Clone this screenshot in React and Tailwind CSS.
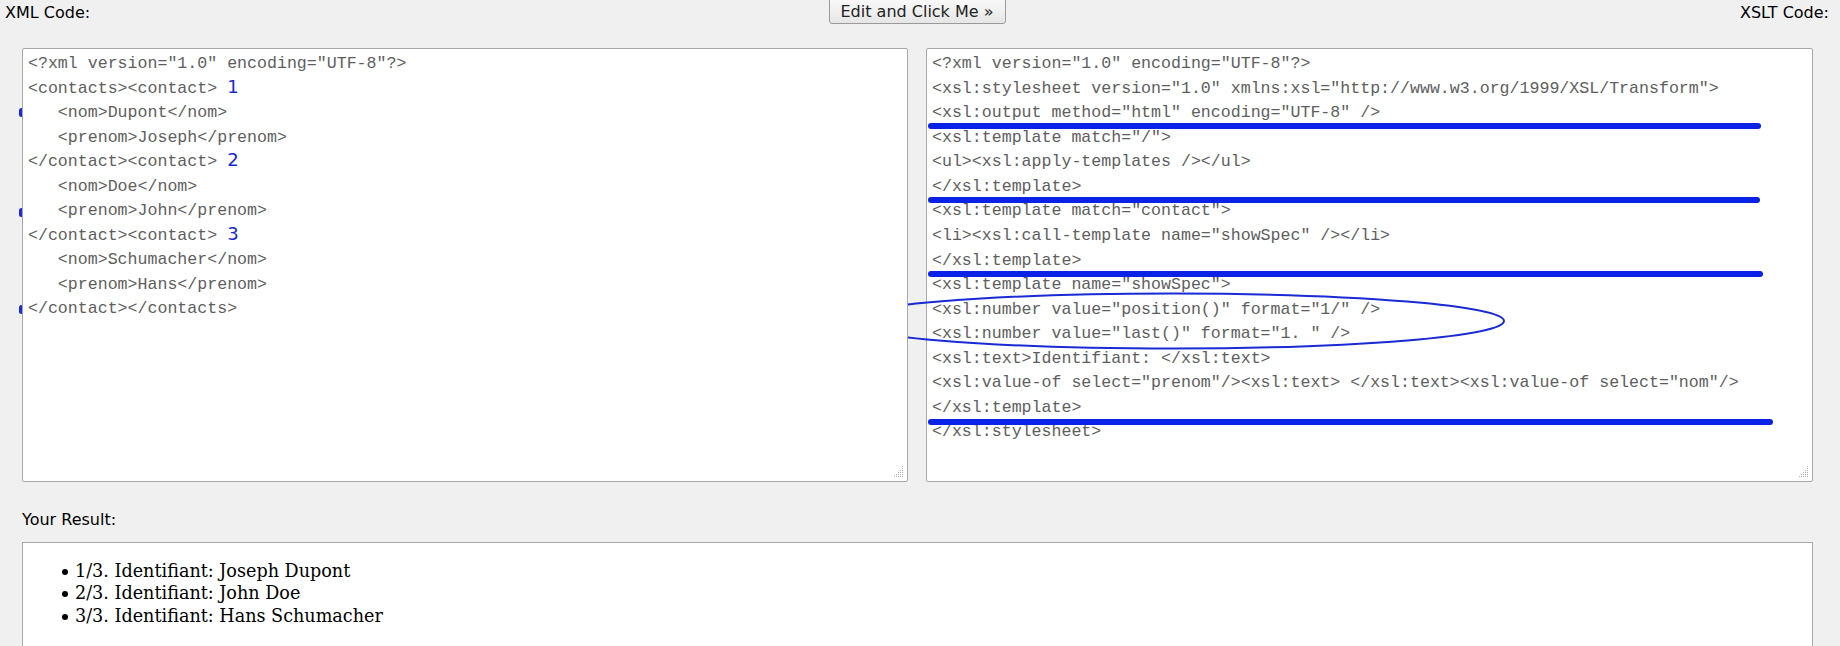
import React from "react";

const xmlLines = [
  { t: '<?xml version="1.0" encoding="UTF-8"?>' },
  { t: "<contacts><contact> ", n: "1" },
  { t: "   <nom>Dupont</nom>" },
  { t: "   <prenom>Joseph</prenom>" },
  { t: "</contact><contact> ", n: "2" },
  { t: "   <nom>Doe</nom>" },
  { t: "   <prenom>John</prenom>" },
  { t: "</contact><contact> ", n: "3" },
  { t: "   <nom>Schumacher</nom>" },
  { t: "   <prenom>Hans</prenom>" },
  { t: "</contact></contacts>" },
];

const xslLines = [
  '<?xml version="1.0" encoding="UTF-8"?>',
  '<xsl:stylesheet version="1.0" xmlns:xsl="http://www.w3.org/1999/XSL/Transform">',
  '<xsl:output method="html" encoding="UTF-8" />',
  '<xsl:template match="/">',
  "<ul><xsl:apply-templates /></ul>",
  "</xsl:template>",
  '<xsl:template match="contact">',
  '<li><xsl:call-template name="showSpec" /></li>',
  "</xsl:template>",
  '<xsl:template name="showSpec">',
  '<xsl:number value="position()" format="1/" />',
  '<xsl:number value="last()" format="1. " />',
  "<xsl:text>Identifiant: </xsl:text>",
  '<xsl:value-of select="prenom"/><xsl:text> </xsl:text><xsl:value-of select="nom"/>',
  "</xsl:template>",
  "</xsl:stylesheet>",
];

const results = [
  "1/3. Identifiant: Joseph Dupont",
  "2/3. Identifiant: John Doe",
  "3/3. Identifiant: Hans Schumacher",
];

function Grip() {
  const pts = [
    [8, 0], [8, 2], [8, 4], [8, 6], [8, 8], [8, 10],
    [6, 4], [6, 6], [6, 8], [6, 10],
    [4, 6], [4, 8], [4, 10],
    [2, 8], [2, 10],
    [0, 10],
  ];
  return (
    <svg className="absolute right-[3px] bottom-[3px]" width="10" height="12" viewBox="0 0 10 12">
      {pts.map(([x, y], i) => (
        <rect key={i} x={x} y={y} width="1" height="1" fill="#b0b0b0" />
      ))}
    </svg>
  );
}

export default function App() {
  return (
    <div className="relative w-[1840px] h-[646px] overflow-hidden bg-[#f0f0f0] font-['DejaVu_Sans',sans-serif] text-[16px] text-black">
      {/* header */}
      <div className="grid grid-cols-[1fr_auto_1fr] items-start h-[24px] pl-[5px] pr-[11px]">
        <div className="leading-[24px] pt-[1px]">XML Code:</div>
        <button className="-mt-[3px] h-[27px] pt-[2px] px-[11px] border border-[#9a9a9a] rounded-[3px] bg-gradient-to-b from-[#fafafa] to-[#e6e6e6] leading-[24px] text-[16px] text-[#222] font-['DejaVu_Sans',sans-serif]">
          Edit and Click Me »
        </button>
        <div className="leading-[24px] pt-[1px] text-right">XSLT Code:</div>
      </div>

      {/* ellipse annotation drawn over the XSLT editor, under the XML editor */}
      <svg className="absolute left-0 top-0 z-10 pointer-events-none" width="1840" height="646">
        <ellipse cx="1173" cy="321" rx="331" ry="27.5" fill="none" stroke="#1a2ad6" strokeWidth="2" />
      </svg>

      {/* editors */}
      <div className="mt-[24px] flex gap-[18px] pl-[19px]">
        <div className="relative z-20 flex">
          {/* annotation marks peeking out at the left edge */}
          <div className="flex flex-col w-[4px] pt-[60px]">
            <div className="w-[5px] h-[9px] rounded-full bg-[#1a2ad6]" />
            <div className="mt-[91px] w-[5px] h-[9px] rounded-full bg-[#1a2ad6]" />
            <div className="mt-[88px] w-[5px] h-[9px] rounded-full bg-[#1a2ad6]" />
          </div>
          <div className="relative -ml-[1px] w-[886px] h-[434px] bg-white border border-[#a8a8a8] rounded-[2px] pl-[5px] pt-[3px] font-['Liberation_Mono',monospace] text-[16.6px] leading-[24.56px] text-[#5e5e5e] whitespace-pre">
            {xmlLines.map((l, i) => (
              <div key={i} className="h-[24.56px]">
                {l.t}
                {l.n && <span className="font-['DejaVu_Sans',sans-serif] text-[18px] leading-[10px] text-[#1a2ad6]">{l.n}</span>}
              </div>
            ))}
            <Grip />
          </div>
        </div>
        <div className="relative w-[887px] h-[434px] bg-white border border-[#a8a8a8] rounded-[2px] pl-[5px] pt-[3px] font-['Liberation_Mono',monospace] text-[16.6px] leading-[24.56px] text-[#5e5e5e] whitespace-pre">
          {xslLines.map((l, i) => (
            <div key={i}>{l}</div>
          ))}
          <div className="absolute left-[1px] top-[74px] w-[833px] h-[6px] rounded-full bg-[#0a22e6]" />
          <div className="absolute left-[1px] top-[148px] w-[832px] h-[6px] rounded-full bg-[#0a22e6]" />
          <div className="absolute left-[1px] top-[222px] w-[835px] h-[6px] rounded-full bg-[#0a22e6]" />
          <div className="absolute left-[1px] top-[370px] w-[845px] h-[6px] rounded-full bg-[#0a22e6]" />
          <Grip />
        </div>
      </div>

      {/* result */}
      <div className="mt-[26px] pl-[22px] leading-[24px]">Your Result:</div>
      <div className="mt-[10px] ml-[22px] w-[1791px] h-[200px] bg-white border border-[#a8a8a8] pt-[17px] pl-[12px]">
        <ul className="pl-[40px] font-['DejaVu_Serif',serif] text-[17.6px] leading-[22.3px] text-black">
          {results.map((r) => (
            <li key={r} className="flex items-center">
              <span className="-ml-[13px] mr-[7px] mt-[2px] w-[6px] h-[6px] rounded-full bg-black" />
              {r}
            </li>
          ))}
        </ul>
      </div>
    </div>
  );
}
